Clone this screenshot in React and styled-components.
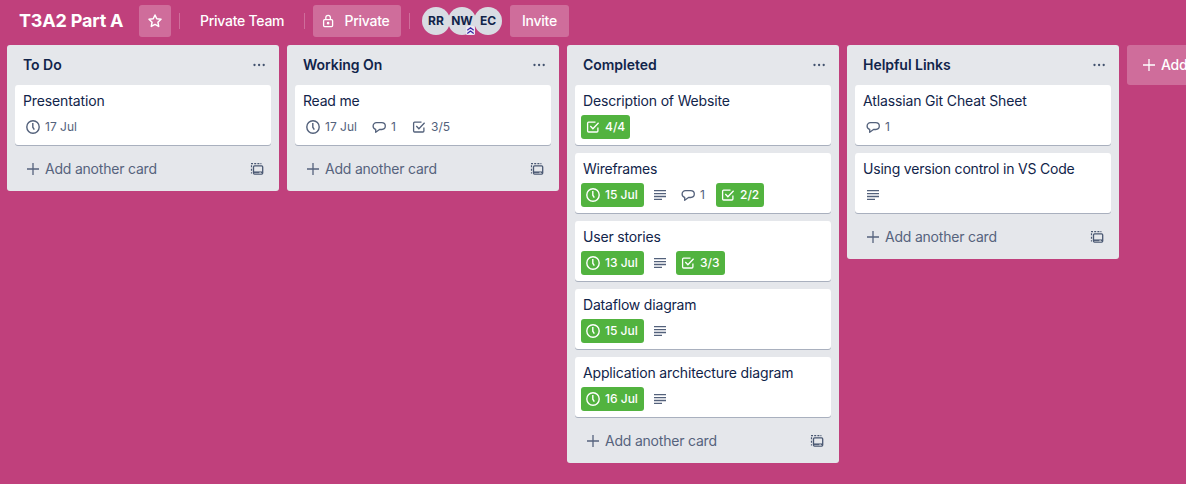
import React from "react";
import styled, { createGlobalStyle } from "styled-components";

const GlobalStyle = createGlobalStyle`
  * { box-sizing: border-box; }
  body {
    margin: 0;
    background: #c0407c;
    overflow: hidden;
    font-family: Inter, "Liberation Sans", sans-serif;
    font-size: 14px;
    line-height: 20px;
    color: #11244a;
  }
`;

const Board = styled.main`
  height: 484px;
  overflow: hidden;
`;

const Header = styled.header`
  display: flex;
  align-items: center;
  height: 45px;
  padding: 0 0 3px 19px;
  color: #fff;
`;

const BoardTitle = styled.h1`
  width: 120px;
  margin: 0;
  font-size: 18px;
  line-height: 24px;
  font-weight: 700;
  letter-spacing: -0.2px;
  white-space: nowrap;
`;

const HeaderButton = styled.div`
  display: flex;
  align-items: center;
  justify-content: center;
  width: ${(p) => p.$width}px;
  height: 32px;
  padding-right: ${(p) => p.$inset || 0}px;
  border-radius: 3px;
  background: rgba(255, 255, 255, 0.24);
  font-weight: 500;
  gap: 9px;
`;

const Divider = styled.span`
  width: 1px;
  height: 16px;
  margin: 0 ${(p) => p.$after}px 0 8px;
  background: rgba(255, 255, 255, 0.24);
`;

const TeamName = styled.span`
  width: 96px;
  font-weight: 500;
  letter-spacing: -0.26px;
  white-space: nowrap;
`;

const Label = styled.span`
  letter-spacing: -0.24px;
  white-space: nowrap;
`;

const Members = styled.div`
  display: flex;
  margin-right: 8px;
`;

const Avatar = styled.div`
  position: relative;
  width: 28px;
  height: 28px;
  margin-right: ${(p) => (p.$last ? 0 : -2)}px;
  border-radius: 50%;
  background: #d9dce3;
  color: #11244a;
  font-size: 12px;
  line-height: 28px;
  font-weight: 700;
  text-align: center;
`;

const AdminMark = styled.svg`
  position: absolute;
  right: 1px;
  bottom: 0;
  z-index: 2;
`;

const Lists = styled.div`
  display: flex;
  align-items: flex-start;
  gap: 8px;
  padding-left: 7px;
`;

const List = styled.section`
  flex: 0 0 272px;
  padding: 0 8px;
  border-radius: 3px;
  background: #e5e7eb;
`;

const ListHeader = styled.div`
  display: flex;
  align-items: center;
  justify-content: space-between;
  height: 40px;
  padding: 0 5px 0 8px;
`;

const ListTitle = styled.h2`
  margin: 0;
  font-size: 14px;
  line-height: 20px;
  font-weight: 600;
  letter-spacing: -0.04px;
`;

const Cards = styled.div`
  display: flex;
  flex-direction: column;
  gap: 8px;
`;

const Card = styled.article`
  height: 60px;
  padding: 6px 6px 0;
  border-radius: 3px;
  background: #fff;
  box-shadow: 0 1px 0 #a9b0be;
`;

const CardTitle = styled.div`
  height: 24px;
  padding-left: 2px;
  letter-spacing: ${(p) => p.$tracking}px;
  white-space: nowrap;
`;

const Badges = styled.div`
  display: flex;
  gap: 4px;
`;

const Badge = styled.span`
  display: flex;
  align-items: center;
  width: ${(p) => p.$width}px;
  height: 24px;
  border-radius: 3px;
  background: ${(p) => (p.$done ? "#52b33f" : "transparent")};
  color: ${(p) => (p.$done ? "#fff" : "#53617b")};
  font-size: 12px;
  font-weight: ${(p) => (p.$done ? 500 : 400)};
  white-space: nowrap;
`;

const Icon = styled.svg`
  display: block;
  flex: none;
  fill: none;
  stroke: currentColor;
`;

const ListFooter = styled.div`
  display: flex;
  align-items: center;
  height: 46px;
  padding: 2px 6px 0 10px;
  color: #56637d;
`;

const FooterText = styled.span`
  flex: 1;
  padding-left: 4px;
  letter-spacing: -0.21px;
`;

const AddList = styled.div`
  display: flex;
  flex: 0 0 272px;
  align-items: center;
  gap: 4px;
  height: 40px;
  padding-left: 14px;
  border-radius: 3px;
  background: rgba(255, 255, 255, 0.24);
  color: #fff;
  font-weight: 500;
`;

const Clock = () => (
  <Icon width="24" height="24" viewBox="0 0 24 24" strokeWidth="1.4">
    <circle cx="12" cy="12" r="6.2" />
    <path d="M11.8 8v4.2l1.5 2.4" />
  </Icon>
);

const Check = () => (
  <Icon width="24" height="24" viewBox="0 0 24 24" strokeWidth="1.3">
    <path d="M14.5 7.2H7.6a1 1 0 0 0-1 1V16a1 1 0 0 0 1 1h8.3a1 1 0 0 0 1-1v-3.5" />
    <path d="M9.3 11l2.6 2.7L17.6 7.7" />
  </Icon>
);

const Comment = () => (
  <Icon width="24" height="24" viewBox="0 0 24 24" strokeWidth="1.3" strokeLinejoin="round">
    <path d="M9.5 7.7h5.2c2 0 3.6 1.4 3.6 3.4s-1.6 3.4-3.6 3.4h-2.2L8.7 17.3v-2.9C7.2 14 6.1 12.7 6.1 11.1c0-2 1.5-3.4 3.4-3.4z" />
  </Icon>
);

const Description = () => (
  <Icon width="24" height="24" viewBox="0 0 24 24" strokeWidth="1.3">
    <path d="M6 7.7h12M6 10.7h12M6 13.5h12M6 16.4h8" />
  </Icon>
);

const Plus = () => (
  <Icon width="16" height="16" viewBox="0 0 16 16" strokeWidth="1.3">
    <path d="M8 2v12M2 8h12" />
  </Icon>
);

const Dots = () => (
  <Icon width="14" height="4" viewBox="0 0 14 4" color="#42526e">
    <path d="M2.5 2h.01M7.1 2h.01M11.7 2h.01" strokeWidth="2.3" strokeLinecap="round" />
  </Icon>
);

const Template = () => (
  <Icon width="16" height="16" viewBox="0 0 16 16" color="#4a5872">
    <path d="M2.5 12.5V11.2M2.5 9.8V7.8M2.5 6.3V4.3M2 2.6h2M5.2 2.6h2M8.4 2.6h2M11.4 2.6h1" strokeWidth="1.2" />
    <rect x="4.5" y="4.9" width="9.2" height="8.2" rx="1" strokeWidth="1.3" />
    <path d="M4.5 11.2h9.2" strokeWidth="1.5" />
    <path d="M10.3 11.9h1.7" stroke="#e5e7eb" strokeWidth=".9" />
  </Icon>
);

const Star = () => (
  <Icon width="16" height="16" viewBox="0 0 16 16" strokeWidth="1.5" strokeLinejoin="round">
    <path d="M8 2l1.75 3.7 4.25.6-3.1 2.9.8 4.2L8 11.4l-3.7 2 .8-4.2L2 6.3l4.25-.6z" />
  </Icon>
);

const Lock = () => (
  <Icon width="14" height="16" viewBox="0 0 14 16" strokeWidth="1.3">
    <rect x="2.6" y="6.7" width="9" height="6.9" rx="1" />
    <path d="M4.8 6.7V4.6a2.3 2.3 0 0 1 4.6 0v2.1" />
    <circle cx="7.1" cy="10.2" r=".7" fill="currentColor" />
  </Icon>
);

const icons = { date: Clock, check: Check, comment: Comment, description: Description };

const lists = [
  {
    title: "To Do",
    cards: [{ title: "Presentation", tracking: -0.12, badges: [["date", "17 Jul", 62]] }],
  },
  {
    title: "Working On",
    cards: [
      {
        title: "Read me",
        tracking: -0.2,
        badges: [["date", "17 Jul", 62], ["comment", "1", 36], ["check", "3/5", 49]],
      },
    ],
  },
  {
    title: "Completed",
    cards: [
      { title: "Description of Website", tracking: -0.17, badges: [["check", "4/4", 49, true]] },
      {
        title: "Wireframes",
        tracking: -0.25,
        badges: [["date", "15 Jul", 63, true], ["description", "", 24], ["comment", "1", 36], ["check", "2/2", 48, true]],
      },
      {
        title: "User stories",
        tracking: -0.18,
        badges: [["date", "13 Jul", 63, true], ["description", "", 24], ["check", "3/3", 49, true]],
      },
      {
        title: "Dataflow diagram",
        tracking: -0.19,
        badges: [["date", "15 Jul", 63, true], ["description", "", 24]],
      },
      {
        title: "Application architecture diagram",
        tracking: -0.15,
        badges: [["date", "16 Jul", 63, true], ["description", "", 24]],
      },
    ],
  },
  {
    title: "Helpful Links",
    cards: [
      { title: "Atlassian Git Cheat Sheet", tracking: -0.14, badges: [["comment", "1", 36]] },
      { title: "Using version control in VS Code", tracking: -0.2, badges: [["description", "", 24]] },
    ],
  },
];

export default function App() {
  return (
    <Board>
      <GlobalStyle />
      <Header>
        <BoardTitle>T3A2 Part A</BoardTitle>
        <HeaderButton $width={32}><Star /></HeaderButton>
        <Divider $after={20} />
        <TeamName>Private Team</TeamName>
        <Divider $after={8} />
        <HeaderButton $width={88} $inset={3}><Lock /><Label>Private</Label></HeaderButton>
        <Divider $after={12} />
        <Members>
          <Avatar>RR</Avatar>
          <Avatar>
            NW
            <AdminMark width="9" height="9" viewBox="0 0 9 9">
              <rect width="9" height="9" rx="1.5" fill="#eceaf3" />
              <path d="M1.3 4.3l3.2-2.5 3.2 2.5M1.3 7.5L4.5 5l3.2 2.5" fill="none" stroke="#3427a8" strokeWidth="1.2" />
            </AdminMark>
          </Avatar>
          <Avatar $last>EC</Avatar>
        </Members>
        <HeaderButton $width={59}><Label>Invite</Label></HeaderButton>
      </Header>
      <Lists>
        {lists.map((list) => (
          <List key={list.title}>
            <ListHeader>
              <ListTitle>{list.title}</ListTitle>
              <Dots />
            </ListHeader>
            <Cards>
              {list.cards.map((card) => (
                <Card key={card.title}>
                  <CardTitle $tracking={card.tracking}>{card.title}</CardTitle>
                  <Badges>
                    {card.badges.map(([type, text, width, done]) => {
                      const BadgeIcon = icons[type];
                      return (
                        <Badge key={type} $width={width} $done={done}>
                          <BadgeIcon />
                          {text}
                        </Badge>
                      );
                    })}
                  </Badges>
                </Card>
              ))}
            </Cards>
            <ListFooter>
              <Plus />
              <FooterText>Add another card</FooterText>
              <Template />
            </ListFooter>
          </List>
        ))}
        <AddList><Plus /><Label>Add another list</Label></AddList>
      </Lists>
    </Board>
  );
}
